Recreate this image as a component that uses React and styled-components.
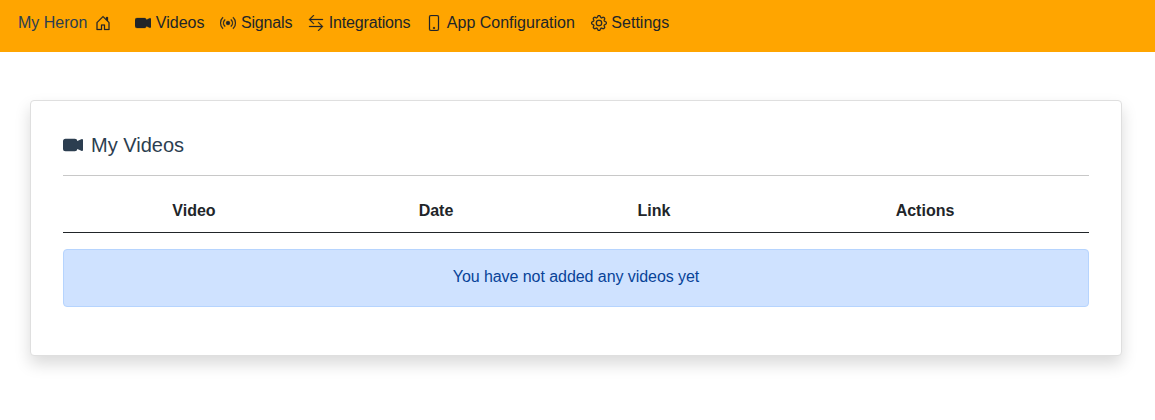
import React from "react";
import styled, { createGlobalStyle } from "styled-components";
import { BsHouseDoor, BsCameraVideoFill, BsBroadcast, BsArrowLeftRight, BsPhone, BsGear } from "react-icons/bs";

const Global = createGlobalStyle`
  html, body { margin: 0; padding: 0; background: #fff; min-height: 100vh; }
  body { font-family: "Liberation Sans", Arial, sans-serif; font-size: 16px; line-height: 24px; color: #212529; -webkit-font-smoothing: antialiased; text-rendering: optimizeLegibility; }
  * { box-sizing: border-box; }
`;

const Navbar = styled.nav`
  display: flex;
  align-items: center;
  height: 52px;
  padding: 0 0 6px 18px;
  background: #ffa500;
  svg { stroke: currentColor; stroke-width: 0.25; }
`;
const Brand = styled.a`
  display: flex;
  align-items: center;
  gap: 8px;
  margin-right: 24px;
  color: #2c3e50;
  svg { color: #212529; }
`;
const NavList = styled.div`
  display: flex;
  align-items: center;
  gap: 16px;
`;
const NavItem = styled.a`
  display: flex;
  align-items: center;
  gap: 4.45px;
  color: #212529;
  letter-spacing: ${(p) => p.$track}px;
`;
const Main = styled.main`
  padding: 48px 33px 65px 30px;
`;
const Card = styled.section`
  height: 256px;
  padding: 32px;
  background: #fff;
  border: 1px solid #dfdfdf;
  border-radius: 4px;
  box-shadow: 0 8px 16px rgba(0, 0, 0, 0.15);
`;
const Title = styled.h2`
  display: flex;
  align-items: center;
  gap: 8px;
  margin: 0;
  height: 24px;
  font-size: 20px;
  font-weight: 400;
  line-height: 24px;
  color: #2c3e50;
`;
const Rule = styled.hr`
  margin: 18px 0 0;
  border: 0;
  border-top: 1px solid #c8c8c8;
`;
const Table = styled.table`
  width: 100%;
  table-layout: fixed;
  border-collapse: collapse;
`;
const Head = styled.th`
  width: ${(p) => p.$w}px;
  height: 56px;
  padding: 14px 0 0;
  text-align: center;
  font-weight: 700;
  border-bottom: 1px solid #212529;
`;
const Alert = styled.div`
  margin-top: 16px;
  height: 58px;
  padding-bottom: 2px;
  display: flex;
  align-items: center;
  justify-content: center;
  background: #cfe2ff;
  border: 1px solid #b6d4fe;
  border-radius: 4px;
  color: #084298;
  letter-spacing: -0.06px;
`;

const items = [
  [BsCameraVideoFill, "Videos", 0],
  [BsBroadcast, "Signals", -0.14],
  [BsArrowLeftRight, "Integrations", -0.17],
  [BsPhone, "App Configuration", 0],
  [BsGear, "Settings", 0],
];

export default function App() {
  return (
    <>
      <Global />
      <Navbar>
        <Brand>
          My Heron <BsHouseDoor size={16} />
        </Brand>
        <NavList>
          {items.map(([Icon, label, track]) => (
            <NavItem key={label} $track={track}>
              <Icon size={16} />
              {label}
            </NavItem>
          ))}
        </NavList>
      </Navbar>
      <Main>
        <Card>
          <Title>
            <BsCameraVideoFill size={20} />
            My Videos
          </Title>
          <Rule />
          <Table>
            <thead>
              <tr>
                <Head $w={262}>Video</Head>
                <Head $w={222}>Date</Head>
                <Head $w={214}>Link</Head>
                <Head $w={328}>Actions</Head>
              </tr>
            </thead>
          </Table>
          <Alert>You have not added any videos yet</Alert>
        </Card>
      </Main>
    </>
  );
}
